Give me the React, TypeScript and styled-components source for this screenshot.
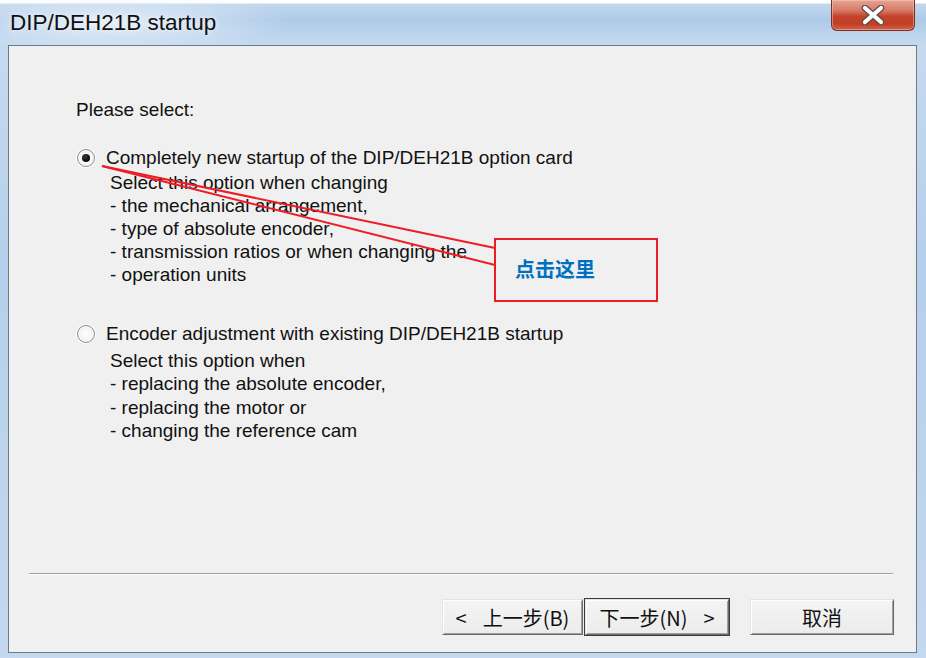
import React from "react";
import styled, { createGlobalStyle } from "styled-components";

const Global = createGlobalStyle`
  html, body { margin: 0; padding: 0; }
  body { background: #c6daef; overflow: hidden; }
`;

const Window = styled.div`
  position: relative;
  width: 926px;
  height: 658px;
  display: flex;
  flex-direction: column;
  background: linear-gradient(180deg, #ffffff 0px, #ffffff 3px, #c9dcf0 3px, #b6cfea 40%, #c4d8ee 100%);
  font-family: "Liberation Sans", Arial, sans-serif;
  box-sizing: border-box;
`;

const TitleBar = styled.div`
  height: 45px;
  flex: none;
  display: flex;
  align-items: flex-start;
  padding-left: 10px;
  background:
    radial-gradient(ellipse 180px 30px at 110px 22px, rgba(235, 243, 251, 0.85), rgba(235, 243, 251, 0) 100%),
    linear-gradient(180deg, #ffffff 0px, #ffffff 3px, #c3d8ee 4px, #aecae8 45%, #c7dbf0 100%);
`;

const Title = styled.div`
  padding-top: 10px;
  font-size: 22.5px;
  line-height: 26px;
  color: #101010;
  text-shadow: 0 0 6px rgba(255, 255, 255, 0.9);
`;

const CloseButton = styled.div`
  margin-left: auto;
  margin-right: 11px;
  width: 84px;
  height: 31px;
  box-sizing: border-box;
  border: 1px solid #7a3024;
  border-top: none;
  border-radius: 0 0 6px 6px;
  background: linear-gradient(180deg, #e6a494 0%, #d77a64 35%, #c4412a 55%, #c23f27 80%, #d2644a 100%);
  box-shadow: inset 0 0 0 1px rgba(255, 210, 200, 0.45);
  display: flex;
  align-items: center;
  justify-content: center;
`;

const Client = styled.div`
  flex: 1;
  margin: 0 9px 5px 8px;
  border: 1px solid #6b7a8a;
  background: #f0f0f0;
  display: flex;
  flex-direction: column;
  min-height: 0;
`;

const Content = styled.div`
  flex: 1;
  padding: 52px 0 0 67px;
  color: #111;
  font-size: 19px;
`;

const Intro = styled.div`
  line-height: 23px;
`;

const OptionList = styled.div`
  margin-top: 25px;
  display: flex;
  flex-direction: column;
  gap: 36px;
`;

const Option = styled.div`
  display: grid;
  grid-template-columns: 30px 1fr;
`;

const Radio = styled.span<{ $checked?: boolean }>`
  align-self: center;
  margin-left: 1px;
  width: 18px;
  height: 18px;
  box-sizing: border-box;
  border-radius: 50%;
  border: 1px solid #8e8f8f;
  background: radial-gradient(circle at 50% 50%, #ffffff 0%, #f4f4f4 55%, #dcdcdc 100%);
  box-shadow: inset 0 0 0 2px #f6f6f6, 0 0 0 1px #ffffff;
  display: flex;
  align-items: center;
  justify-content: center;
  &::after {
    content: "";
    display: ${(p) => (p.$checked ? "block" : "none")};
    width: 8px;
    height: 8px;
    border-radius: 50%;
    background: radial-gradient(circle at 40% 35%, #3a3a3a 0%, #050505 70%);
  }
`;

const Label = styled.div`
  line-height: 24px;
`;

const Description = styled.div<{ $lead: number; $line: number }>`
  grid-column: 2;
  margin: ${(p) => p.$lead}px 0 0 4px;
  line-height: ${(p) => p.$line}px;
`;

const Footer = styled.div`
  flex: none;
  display: flex;
  flex-direction: column;
`;

const Separator = styled.div`
  margin: 0 23px 0 20px;
  height: 1px;
  background: #a0a0a0;
  border-bottom: 1px solid #ffffff;
`;

const ButtonRow = styled.div`
  display: flex;
  justify-content: flex-end;
  padding: 24px 22px 17px 0;
`;

const Button = styled.button<{ $w: number; $default?: boolean; $gap?: number }>`
  width: ${(p) => p.$w}px;
  height: 36px;
  margin-left: ${(p) => p.$gap ?? 0}px;
  padding: 0;
  background: linear-gradient(180deg, #f4f4f4 0%, #ececec 100%);
  border: 1px solid;
  border-color: #e3e3e3 #696969 #696969 #e3e3e3;
  box-shadow: ${(p) =>
    p.$default
      ? "0 0 0 1px #3c3c3c, inset 1px 1px 0 #ffffff, inset -1px -1px 0 #a0a0a0"
      : "inset 1px 1px 0 #ffffff, inset -1px -1px 0 #a0a0a0"};
  font-family: "Noto Sans CJK SC", "Liberation Sans", sans-serif;
  font-size: 20px;
  color: #111;
  display: flex;
  align-items: center;
  justify-content: center;
  gap: 16px;
  cursor: default;
`;

const Overlay = styled.svg`
  position: absolute;
  left: 0;
  top: 0;
  pointer-events: none;
`;

const Callout = styled.div`
  position: absolute;
  left: 494px;
  top: 238px;
  width: 164px;
  height: 64px;
  box-sizing: border-box;
  border: 2px solid #ee1c25;
  display: flex;
  align-items: center;
  padding: 0 0 3px 19px;
  color: #0070c0;
  font-family: "Noto Sans CJK SC", sans-serif;
  font-weight: 700;
  font-size: 20px;
`;

const CloseIcon = () => (
  <svg width="28" height="20" viewBox="0 0 28 20">
    <path d="M6 3 L22 17 M22 3 L6 17" stroke="#5a4a48" strokeWidth="6.5" strokeLinecap="round" />
    <path d="M6 3 L22 17 M22 3 L6 17" stroke="#ffffff" strokeWidth="4.2" strokeLinecap="round" />
  </svg>
);

export default function App() {
  return (
    <>
      <Global />
      <Window>
        <TitleBar>
          <Title>DIP/DEH21B startup</Title>
          <CloseButton>
            <CloseIcon />
          </CloseButton>
        </TitleBar>
        <Client>
          <Content>
            <Intro>Please select:</Intro>
            <OptionList>
              <Option>
                <Radio $checked />
                <Label>Completely new startup of the DIP/DEH21B option card</Label>
                <Description $lead={1} $line={23}>
                  Select this option when changing
                  <br />- the mechanical arrangement,
                  <br />- type of absolute encoder,
                  <br />- transmission ratios or when changing the
                  <br />- operation units
                </Description>
              </Option>
              <Option>
                <Radio />
                <Label>Encoder adjustment with existing DIP/DEH21B startup</Label>
                <Description $lead={3} $line={23.4}>
                  Select this option when
                  <br />- replacing the absolute encoder,
                  <br />- replacing the motor or
                  <br />- changing the reference cam
                </Description>
              </Option>
            </OptionList>
          </Content>
          <Footer>
            <Separator />
            <ButtonRow>
              <Button $w={141}>
                <span>&lt;</span>
                <span>上一步(B)</span>
              </Button>
              <Button $w={144} $gap={2} $default>
                <span>下一步(N)</span>
                <span>&gt;</span>
              </Button>
              <Button $w={144} $gap={21}>
                取消
              </Button>
            </ButtonRow>
          </Footer>
        </Client>
        <Overlay width="926" height="658" viewBox="0 0 926 658">
          <line x1="102" y1="166" x2="495" y2="248" stroke="#ee1c25" strokeWidth="2" />
          <line x1="102" y1="166" x2="495" y2="265" stroke="#ee1c25" strokeWidth="2" />
        </Overlay>
        <Callout>点击这里</Callout>
      </Window>
    </>
  );
}
